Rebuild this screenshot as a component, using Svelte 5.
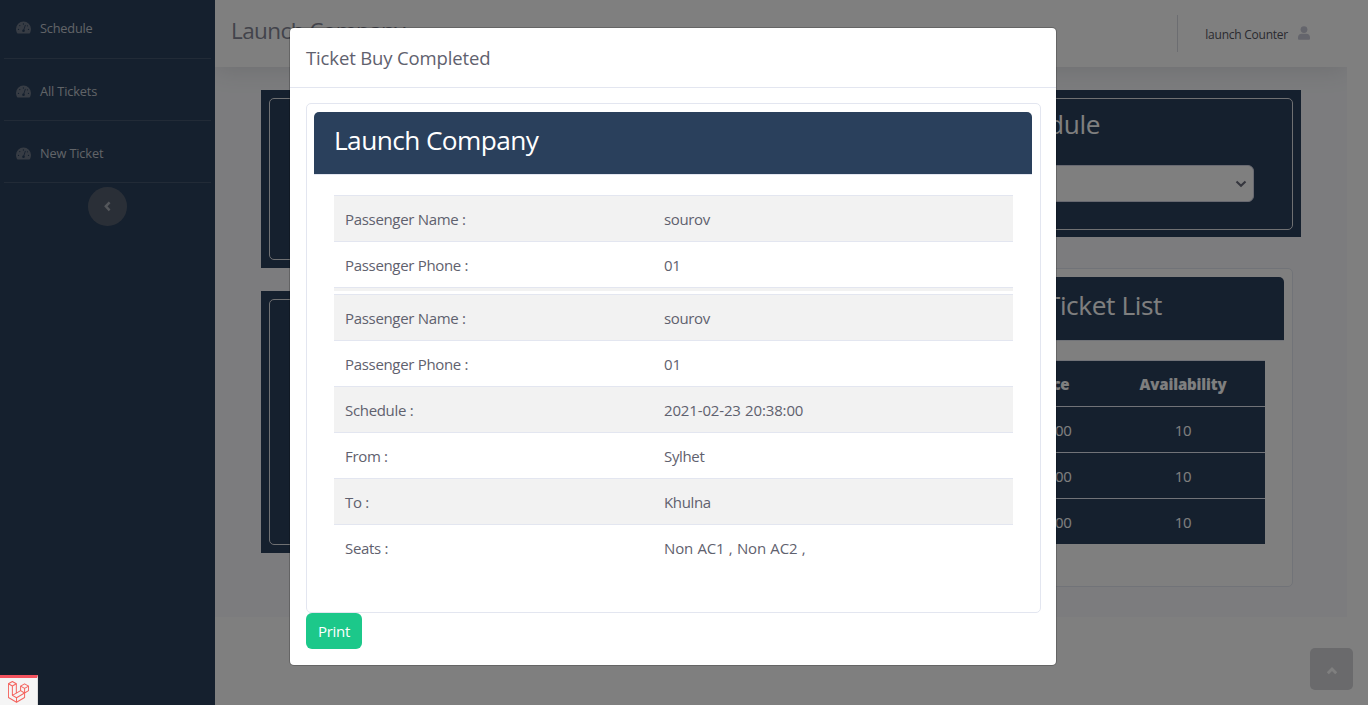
<script>
  const links = ['Schedule', 'All Tickets', 'New Ticket'];
  const passenger = [
    ['Passenger Name :', 'sourov'],
    ['Passenger Phone :', '01']
  ];
  const ticket = [
    ['Passenger Name :', 'sourov'],
    ['Passenger Phone :', '01'],
    ['Schedule :', '2021-02-23 20:38:00'],
    ['From :', 'Sylhet'],
    ['To :', 'Khulna'],
    ['Seats :', 'Non AC1 , Non AC2 ,']
  ];
  const prices = ['500.00', '500.00', '500.00'];
</script>

<div class="page">
  <aside class="sidebar">
    {#each links as link}
      <a class="nav" href="#top">
        <svg width="15" height="13" viewBox="0 0 15 13">
          <path fill="currentColor" d="M7.5.6A7.5 7.5 0 0 0 0 8.1c0 1.4.4 2.8 1 3.9.2.3.4.4.7.4h11.6c.3 0 .5-.1.7-.4.6-1.1 1-2.5 1-3.9A7.5 7.5 0 0 0 7.5.6z" />
          <g fill="#2a405c"><circle cx="7.4" cy="3" r=".65" /><circle cx="3.8" cy="4.6" r=".65" /><circle cx="2.5" cy="8.4" r=".65" /><circle cx="12.5" cy="8.4" r=".65" /><circle cx="11.4" cy="4.8" r=".6" /><circle cx="7.5" cy="9.8" r="1.3" /></g>
          <path d="M7.5 9.7 9.3 4.3" stroke="#2a405c" stroke-width=".9" stroke-linecap="round" />
        </svg>
        <span>{link}</span>
      </a>
    {/each}
    <button class="toggle" aria-label="Collapse">
      <svg width="8" height="11" viewBox="0 0 8 11"><path d="M5.6 1.3 1.8 5.3l3.8 4" fill="none" stroke="currentColor" stroke-width="2.4" /></svg>
    </button>
  </aside>

  <div class="wrapper">
    <header class="topbar">
      <h3>Launch Company</h3>
      <div class="user">
        <span>launch Counter</span>
        <svg width="12" height="14" viewBox="0 0 12 14"><circle cx="6" cy="3.6" r="3.4" /><path d="M0 11.5C0 9 1.4 7.7 3.6 7.7h4.8C10.6 7.7 12 9 12 11.5v1c0 .8-.5 1.3-1.3 1.3H1.3C.5 13.8 0 13.3 0 12.5z" /></svg>
      </div>
    </header>
    <main>
      <div class="col">
        <section class="panel first"><div class="frame"></div></section>
        <section class="panel second"><div class="frame"></div></section>
      </div>
      <div class="col">
        <section class="panel pick">
          <div class="frame">
            <h2>Select Schedule</h2>
            <div class="select">
              <svg width="12" height="8" viewBox="0 0 12 8"><path d="m1.5 1.5 4.5 4.3 4.5-4.3" fill="none" stroke="#6b6d7c" stroke-width="2.1" /></svg>
            </div>
          </div>
        </section>
        <section class="list">
          <div class="list-head"><h2>Ticket List</h2></div>
          <div class="prices">
            <div class="line head"><span></span><b>Price</b><b>Availability</b></div>
            {#each prices as price}
              <div class="line"><span></span><span class="price">{price}</span><span>10</span></div>
            {/each}
          </div>
        </section>
      </div>
    </main>
  </div>

  <div class="totop">
    <svg width="12" height="9" viewBox="0 0 12 9"><path d="M1.8 7.2 6 3l4.2 4.2" fill="none" stroke="#fff" stroke-width="2.8" /></svg>
  </div>
</div>

<div class="backdrop">
  <div class="modal">
    <div class="modal-head"><h5>Ticket Buy Completed</h5></div>
    <div class="modal-body">
      <div class="card">
        <div class="card-head"><h1>Launch Company</h1></div>
        <div class="tables">
          <div class="table">
            {#each passenger as [label, value]}
              <div class="row"><span>{label}</span><span class="value">{value}</span></div>
            {/each}
            <div class="rest"></div>
          </div>
          <div class="table">
            {#each ticket as [label, value]}
              <div class="row"><span>{label}</span><span class="value" class:wide={/\d/.test(value)}>{value}</span></div>
            {/each}
          </div>
        </div>
      </div>
      <button class="print">Print</button>
    </div>
  </div>
</div>

<div class="debugbar">
  <svg width="21" height="22" viewBox="0 0 50 52" fill="none" stroke="#f4645f" stroke-width="2.4" stroke-linejoin="round">
    <path d="M1 6.4 10.4 1l9.4 5.4v22.2L30 22.8V12l9.5-5.4L49 12v10.8l-9.5 5.5V39L20.3 50.5 1 39z" />
    <path d="M1 6.4l9.4 5.4 9.4-5.4M10.4 11.8v22.1l9.9 5.7v10.9M10.4 33.9l9.4-5.3M20.3 39.6l19.2-11.3M30 12l9.5 5.4L49 12M39.5 17.4v10.9L30 22.8" />
  </svg>
</div>

<style>
  :global(body) {
    font-family: 'Open Sans', 'Noto Sans', sans-serif;
    font-size: 15px;
    line-height: 22.5px;
    color: #5f616e;
    overflow: hidden;
  }
  :global(*) { box-sizing: border-box; }
  h1, h2, h3, h5 { margin: 0; font-weight: 400; }
  .page { display: flex; height: 705px; background: #fff; }

  .sidebar {
    width: 215px; padding: 0 4px; background: #2a405c;
    display: flex; flex-direction: column; align-items: center; flex: none;
  }
  .nav {
    width: 100%; height: 62px; padding: 4px 12px 0; display: flex; align-items: center; gap: 9px;
    border-bottom: 1px solid #44566f; color: #c3c8d0; text-decoration: none;
    font-size: 12.75px; letter-spacing: -0.2px;
  }
  .nav:first-child { height: 59px; padding: 0 12px 2px; }
  .nav svg { color: #6e7989; flex: none; margin-top: -1px; }
  .nav:nth-child(2) span, .nav:nth-child(3) span { letter-spacing: -0.14px; }
  .toggle {
    width: 39px; height: 39px; margin-top: 4px; border: 0; border-radius: 50%;
    background: #555f6f; color: #a9aeb7; display: flex; align-items: center; justify-content: center; padding: 0;
  }

  .wrapper { width: 1132px; height: 617px; background: #f8f9fc; overflow: hidden; }
  .topbar {
    height: 67px; background: #fff; padding: 0 37px 0 16px; display: flex; align-items: center; justify-content: space-between;
    box-shadow: 0 2px 26px rgba(58, 59, 69, 0.15);
  }
  h3 { font-size: 22.5px; letter-spacing: -0.58px; color: #858796; margin-top: -4px; }
  .user {
    height: 37px; border-left: 1px solid #d9dae3; padding-left: 27px; display: flex; align-items: center; gap: 10px;
    color: #55565f; font-size: 12px; letter-spacing: -0.24px;
  }
  .user span { padding-top: 3px; }
  .user svg { fill: #c9cad8; margin-top: -2px; }

  main { display: grid; grid-template-columns: 508px 508px; gap: 24px; padding: 23px 46px; }
  .panel { background: #2a405c; padding: 8px; margin-bottom: 23px; }
  .frame { height: 100%; border: 1px solid #dfe0e4; border-radius: 5px; }
  .first { height: 178px; }
  .second { height: 262px; }
  .pick { height: 147px; margin-bottom: 31px; }
  .pick .frame { height: 132px; }
  h2 { font-size: 26.25px; line-height: 32px; color: #fff; text-align: right; letter-spacing: -0.4px; }
  .pick h2 { padding: 9px 192px 0 0; }
  .select {
    height: 37px; margin: 25px 38px 0; background: #fff; border: 1px solid #d1d3e2; border-radius: 6px;
    display: flex; align-items: center; justify-content: flex-end; padding-right: 6px;
  }
  .list { height: 319px; width: 500px; background: #fff; border: 1px solid #e3e6f0; border-radius: 5px; padding: 8px; }
  .list-head { height: 64px; background: #2a405c; border-radius: 5px 5px 0 0; border-bottom: 1px solid #e3e6f0; padding: 12px 122px 0 0; }
  .prices { margin: 19px 19px 0; color: #fff; border-top: 1px solid #e3e6f0; }
  .line {
    display: grid; grid-template-columns: 1fr 101px 164px; height: 46px; align-items: center; padding-top: 1px;
    text-align: center; background: #2a405c; border-bottom: 1px solid #e3e6f0; letter-spacing: -0.3px;
  }
  .head { padding-top: 2px; }
  .line:last-child { border-bottom: 0; height: 45px; }
  .line b { font-weight: 800; font-size: 15px; letter-spacing: -0.15px; }
  .price { padding-right: 3px; }

  .totop {
    position: absolute; left: 1310px; top: 648px; width: 43px; height: 42px; border-radius: 5px;
    background: #d4d4d8; display: flex; align-items: center; justify-content: center; padding-top: 2px;
  }

  .backdrop { position: absolute; inset: 0; background: rgba(0, 0, 0, 0.5); padding-top: 27px; }
  .modal {
    width: 768px; height: 639px; margin-left: 289px; background: #fff; background-clip: padding-box;
    border: 1px solid rgba(0, 0, 0, 0.2); border-radius: 5px;
  }
  .modal-head { height: 60px; border-bottom: 1px solid #e3e6f0; padding: 19px 16px; }
  h5 { font-size: 18.5px; letter-spacing: -0.14px; }
  .modal-body { padding: 15px 15px 0 16px; }
  .card { height: 510px; border: 1px solid #e3e6f0; border-radius: 5px; padding: 8px 8px 0 7px; }
  .card-head {
    height: 63px; background: #2a405c; border-bottom: 1px solid #e3e6f0; border-radius: 5px 5px 0 0; padding: 12px 20px;
  }
  h1 { font-size: 26.25px; line-height: 32px; color: #fff; letter-spacing: -0.58px; }
  .tables { padding: 20px 19px 0 20px; display: flex; flex-direction: column; gap: 3px; }
  .row {
    height: 46px; border-top: 1px solid #e3e6f0; display: grid; grid-template-columns: 319px 1fr; align-items: center; padding: 1px 11px 0;
    font-size: 15px; letter-spacing: -0.32px;
  }
  .value { letter-spacing: -0.35px; }
  .wide { letter-spacing: -0.15px; word-spacing: 0.6px; }
  .row:nth-child(odd) { background: #f2f2f2; }
  .rest { height: 4px; background: #f2f2f2; border-top: 1px solid #e3e6f0; }
  .print {
    display: block; width: 56px; height: 36px; border: 0; border-radius: 6px; background: #1cc88a; color: #fff;
    font: 400 15px 'Open Sans', sans-serif; letter-spacing: -0.3px; padding: 0;
  }
  .debugbar {
    position: absolute; left: 0; bottom: 0; width: 38px; height: 30px; background: #f5f5f5;
    border-top: 3px solid #f4535f; border-right: 1px solid #ddd; padding: 3px 0 0 8px;
  }
  .debugbar svg { display: block; }
</style>
